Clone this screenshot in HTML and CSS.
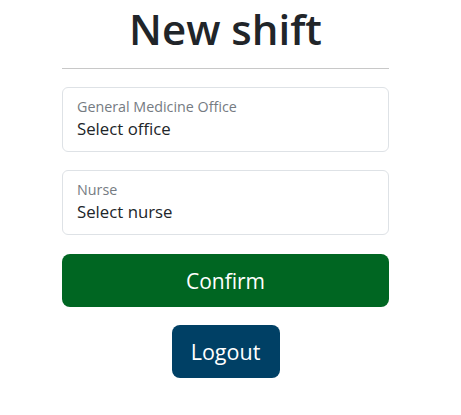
FILE: index.html
```html
<!DOCTYPE html>
<html>
<head>
<meta charset="utf-8">
<link rel="stylesheet" href="styles.css">
</head>
<body>
<main class="page">
  <h1 class="title">New shift</h1>
  <hr class="rule">
  <div class="field">
    <span class="label">General Medicine Office</span>
    <span class="value">Select office</span>
  </div>
  <div class="field">
    <span class="label">Nurse</span>
    <span class="value">Select nurse</span>
  </div>
  <button class="btn confirm">Confirm</button>
  <button class="btn logout">Logout</button>
</main>
</body>
</html>
```
FILE: styles.css
```css
* { box-sizing: border-box; }
body {
  margin: 0;
  background: #fff;
  font-family: "Open Sans", "Noto Sans", sans-serif;
  color: #212529;
}
.page {
  width: 327px;
  margin: 0 0 0 62px;
  display: flex;
  flex-direction: column;
  align-items: stretch;
}
.title {
  margin: 0;
  padding-top: 4px;
  text-align: center;
  font-size: 42px;
  font-weight: 600;
  line-height: 50px;
  color: #212529;
}
.rule {
  margin: 14px 0 18px;
  border: 0;
  border-top: 1px solid #c8c8c8;
}
.field {
  height: 65px;
  border: 1px solid #dee2e6;
  border-radius: 6px;
  padding: 9px 14px 0;
  display: flex;
  flex-direction: column;
  margin-bottom: 18px;
}
.label {
  font-size: 14.3px;
  line-height: 20px;
  color: #757b82;
}
.value {
  font-size: 16.8px;
  line-height: 23px;
  color: #212529;
}
.btn {
  border: 0;
  color: #fff;
  font-family: inherit;
  font-size: 21px;
  height: 53px;
  border-radius: 8px;
  padding: 0;
}
.confirm {
  background: #006622;
  width: 100%;
  margin-top: 1px;
}
.logout {
  background: #004065;
  width: 108px;
  align-self: center;
  margin-top: 18px;
  font-size: 21.5px;
}
```
